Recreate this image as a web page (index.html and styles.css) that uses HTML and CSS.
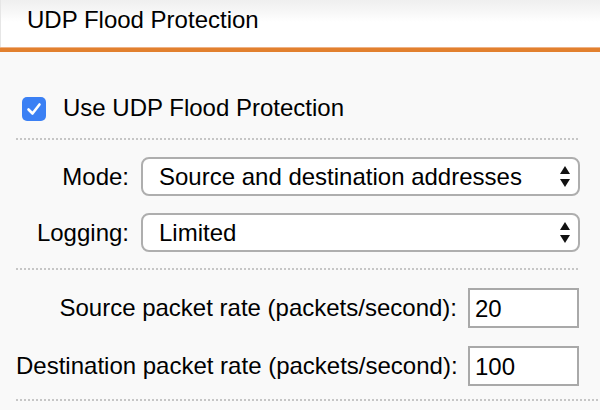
FILE: index.html
```html
<!DOCTYPE html>
<html>
<head>
<meta charset="utf-8">
<link rel="stylesheet" href="styles.css">
</head>
<body>
<div class="header">
  <div class="title">UDP Flood Protection</div>
</div>
<div class="accent"></div>
<div class="content">
  <label class="check-row">
    <span class="checkbox">
      <svg width="24" height="24" viewBox="0 0 24 24"><path d="M6.5 12.5 L10.5 16.5 L17.5 7.5" fill="none" stroke="#fff" stroke-width="2.6" stroke-linecap="round" stroke-linejoin="round"/></svg>
    </span>
    <span class="check-text">Use UDP Flood Protection</span>
  </label>
  <div class="dots short first"></div>
  <div class="grid selects">
    <div class="lbl">Mode:</div>
    <div class="select-wrap">
      <select class="select"><option>Source and destination addresses</option></select>
      <svg class="arrows" width="10" height="22" viewBox="0 0 10 22"><path d="M5 0 L10 8 L0 8 Z M0 13 L10 13 L5 21 Z" fill="#111"/></svg>
    </div>
    <div class="lbl">Logging:</div>
    <div class="select-wrap">
      <select class="select"><option>Limited</option></select>
      <svg class="arrows" width="10" height="22" viewBox="0 0 10 22"><path d="M5 0 L10 8 L0 8 Z M0 13 L10 13 L5 21 Z" fill="#111"/></svg>
    </div>
  </div>
  <div class="dots short second"></div>
  <div class="grid rates">
    <div class="lbl">Source packet rate (packets/second):</div>
    <input class="num" type="text" value="20">
    <div class="lbl">Destination packet rate (packets/second):</div>
    <input class="num" type="text" value="100">
  </div>
  <div class="dots long"></div>
</div>
</body>
</html>
```
FILE: styles.css
```css
html, body {
  margin: 0;
  padding: 0;
}
body {
  width: 600px;
  height: 410px;
  overflow: hidden;
  background: #f9f9f9;
  font-family: "Liberation Sans", Arial, sans-serif;
  color: #000;
}
.header {
  height: 47px;
  box-sizing: border-box;
  padding: 6px 0 0 27px;
  background: linear-gradient(to bottom, #efefef 0px, #f7f7f7 12px, #ffffff 22px, #ffffff 47px);
  border-left: 1px solid #e6e6e6;
  padding-left: 26px;
}
.title {
  font-size: 24px;
  line-height: 27px;
}
.accent {
  height: 4px;
  border-top: 1px solid #eeb285;
  background: #e2802e;
}
.content {
  padding-left: 16px;
}
.check-row {
  display: flex;
  align-items: center;
  margin-top: 45px;
  margin-left: 6px;
  height: 24px;
}
.checkbox {
  width: 24px;
  height: 24px;
  border-radius: 5px;
  background: #3b80f4;
  display: flex;
}
.check-text {
  margin-left: 17px;
  font-size: 24px;
  line-height: 24px;
  position: relative;
  top: -1px;
}
.dots {
  height: 2px;
  background: repeating-linear-gradient(to right, #c6c6c6 0px, #c6c6c6 2px, transparent 2px, transparent 4px);
}
.dots.short {
  margin-right: 20px;
}
.dots.first {
  margin-top: 17px;
}
.dots.second {
  margin-top: 16px;
}
.dots.long {
  margin-top: 13px;
}
.grid {
  display: grid;
  align-items: center;
}
.selects {
  grid-template-columns: 113px 439px;
  column-gap: 12px;
  row-gap: 17px;
  margin-top: 17px;
}
.rates {
  grid-template-columns: 441px 111px;
  column-gap: 11px;
  row-gap: 18px;
  margin-top: 18px;
}
.lbl {
  font-size: 24px;
  text-align: right;
  white-space: nowrap;
}
.select-wrap {
  position: relative;
  height: 39px;
}
.select {
  appearance: none;
  -webkit-appearance: none;
  width: 100%;
  height: 39px;
  box-sizing: border-box;
  border: 2px solid #aeaeae;
  border-radius: 8px;
  background: #fff;
  font-family: "Liberation Sans", Arial, sans-serif;
  font-size: 24px;
  color: #000;
  padding: 0 30px 0 16px;
  margin: 0;
  outline: none;
}
.arrows {
  position: absolute;
  right: 10px;
  top: 9px;
  pointer-events: none;
}
.num {
  width: 111px;
  height: 40px;
  box-sizing: border-box;
  border: 2px solid #a9a9a9;
  border-radius: 0;
  background: #fff;
  font-family: "Liberation Sans", Arial, sans-serif;
  font-size: 24px;
  color: #000;
  padding: 2px 0 0 5px;
  margin: 0;
  outline: none;
}
```
